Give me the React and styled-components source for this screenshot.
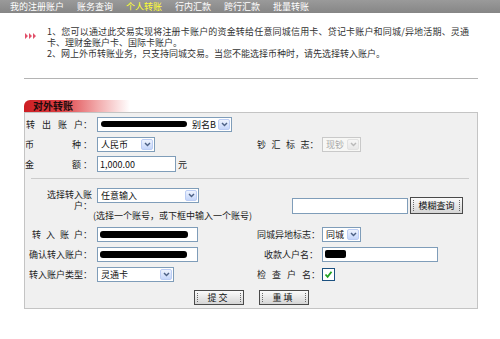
import React from 'react'
import styled, { createGlobalStyle } from 'styled-components'

const GlobalStyle = createGlobalStyle`
  body {
    margin: 0;
    background: #fff;
    font-family: "Noto Sans CJK SC", "Noto Sans", sans-serif;
    font-size: 9px;
    color: #222;
  }
`

const navItems = ['我的注册账户', '账务查询', '个人转账', '行内汇款', '跨行汇款', '批量转账']

function Chevron({ disabled }) {
    return (
        <svg width="7" height="5" viewBox="0 0 7 5">
            <path d="M1 1 L3.5 3.6 L6 1" fill="none" stroke={disabled ? '#b9b9b9' : '#4d6185'} strokeWidth="1.4" />
        </svg>
    )
}

function Select({ w, disabled, children }) {
    return (
        <SelectBox $w={w} $disabled={disabled}>
            <SelectText>{children}</SelectText>
            <ArrowBtn $disabled={disabled}>
                <Chevron disabled={disabled} />
            </ArrowBtn>
        </SelectBox>
    )
}

function Bullets() {
    return (
        <svg width="11" height="6" viewBox="0 0 11 6">
            <path d="M0 0 L3 3 L0 6 Z M4 0 L7 3 L4 6 Z M8 0 L11 3 L8 6 Z" fill="#e2506a" />
        </svg>
    )
}

function App() {
    return (
        <Page>
            <GlobalStyle />
            <NavBar>
                {navItems.map(item => (
                    <NavItem key={item} $active={item === '个人转账'}>{item}</NavItem>
                ))}
            </NavBar>

            <Notice>
                <BulletBox><Bullets /></BulletBox>
                <NoticeText>
                    <Line $justify>1、您可以通过此交易实现将注册卡账户的资金转给任意同城信用卡、贷记卡账户和同城/异地活期、灵通</Line>
                    <Line>卡、理财金账户卡、国际卡账户。</Line>
                    <Line>2、网上外币转账业务，只支持同城交易。当您不能选择币种时，请先选择转入账户。</Line>
                </NoticeText>
            </Notice>

            <Divider />

            <Section>
                <Tab>对外转账</Tab>
                <Panel>
                    <Row>
                        <Label $ws="5px">转 出 账 户：</Label>
                        <Cell>
                            <Select w={135}>
                                <Mask $w={86} />
                                <Alias>别名B</Alias>
                            </Select>
                        </Cell>
                    </Row>
                    <Row>
                        <SplitLabel><span>币</span><span>种 ：</span></SplitLabel>
                        <Cell><Select w={58}>人民币</Select></Cell>
                        <Label $pr="4px" $ws="3.5px">钞 汇 标 志：</Label>
                        <Cell><Select w={39} disabled>现钞</Select></Cell>
                    </Row>
                    <Row>
                        <SplitLabel><span>金</span><span>额 ：</span></SplitLabel>
                        <Cell>
                            <Field $w={79} $h={16}>1,000.00</Field>
                            <Unit>元</Unit>
                        </Cell>
                    </Row>

                    <Sep />

                    <PickRow>
                        <WrapLabel>选择转入账户：</WrapLabel>
                        <PickMid>
                            <Select w={102}>任意输入</Select>
                            <Hint>(选择一个账号，或下框中输入一个账号)</Hint>
                        </PickMid>
                        <PickRight>
                            <Field $w={116} $h={16} />
                            <SmallButton>模糊查询</SmallButton>
                        </PickRight>
                    </PickRow>

                    <Row>
                        <Label $ws="3px">转 入 账 户：</Label>
                        <Cell><Field $w={101} $h={15}><Mask $w={88} $h={7} /></Field></Cell>
                        <Label $pr="4px">同城异地标志：</Label>
                        <Cell><Select w={39}>同城</Select></Cell>
                    </Row>
                    <Row>
                        <Label>确认转入账户：</Label>
                        <Cell><Field $w={101} $h={15}><Mask $w={87} $h={7} /></Field></Cell>
                        <Label $pr="4px">收款人户名：</Label>
                        <Cell><Field $w={116} $h={15}><Mask $w={21} $h={8} $r="2px" /></Field></Cell>
                    </Row>
                    <Row>
                        <Label>转入账户类型：</Label>
                        <Cell><Select w={77}>灵通卡</Select></Cell>
                        <Label $pr="3px" $ws="4px">检 查 户 名：</Label>
                        <Cell>
                            <CheckBox>
                                <svg width="9" height="9" viewBox="0 0 9 9">
                                    <path d="M1.5 4.5 L3.6 6.8 L7.5 1.8" fill="none" stroke="#21a121" strokeWidth="1.8" />
                                </svg>
                            </CheckBox>
                        </Cell>
                    </Row>

                    <ButtonRow>
                        <Button>提交</Button>
                        <Button>重填</Button>
                    </ButtonRow>
                </Panel>
            </Section>
        </Page>
    )
}

export default App

const Page = styled.div`
    width: 500px;
    height: 339px;
    background: #fff;
`

const NavBar = styled.div`
    height: 13px;
    display: flex;
    align-items: center;
    gap: 13px;
    padding-left: 10px;
    background: linear-gradient(#9a9a9a, #868686);
`

const NavItem = styled.span`
    font-size: 9px;
    line-height: 13px;
    color: ${props => props.$active ? '#ffff33' : '#fff'};
    white-space: nowrap;
`

const Notice = styled.div`
    display: flex;
    padding: 13px 0 0 25px;
`

const BulletBox = styled.div`
    width: 22px;
    flex-shrink: 0;
    padding-top: 3px;
`

const NoticeText = styled.div`
    color: #333;
`

const Line = styled.div`
    height: 11px;
    line-height: 11px;
    white-space: nowrap;
    width: ${props => props.$justify ? '422px' : 'auto'};
    text-align: ${props => props.$justify ? 'justify' : 'left'};
    text-align-last: ${props => props.$justify ? 'justify' : 'auto'};
`

const Divider = styled.div`
    width: 454px;
    height: 1px;
    margin: 19px 0 0 24px;
    background: #b4b4b4;
`

const Section = styled.div`
    width: 454px;
    margin: 21px 0 0 24px;
`

const Tab = styled.div`
    width: 97px;
    height: 12px;
    padding-left: 9px;
    border-radius: 6px 0 0 0;
    background: linear-gradient(to right, #cc1d22 0%, #de4146 35%, #f2acad 70%, #fff 100%);
    font-size: 10px;
    font-weight: bold;
    line-height: 12px;
    color: #1c0b0b;
`

const Panel = styled.div`
    border: 1px solid #c4c4c4;
    background: #f0f0f0;
    padding: 1px 0 3px;
`

const Row = styled.div`
    display: grid;
    grid-template-columns: 72px 160px 65px 1fr;
    height: 20px;
    align-items: center;
`

const Label = styled.div`
    text-align: right;
    padding-right: ${props => props.$pr || '5px'};
    word-spacing: ${props => props.$ws || '0'};
    white-space: nowrap;
    color: #222;
`

const SplitLabel = styled.div`
    display: flex;
    justify-content: space-between;
    padding: 0 5px 0 0;
    white-space: nowrap;
`

const Cell = styled.div`
    display: flex;
    align-items: center;
`

const SelectBox = styled.div`
    box-sizing: border-box;
    width: ${props => props.$w}px;
    height: 15px;
    display: flex;
    align-items: center;
    padding-left: 3px;
    border: 1px solid ${props => props.$disabled ? '#c9c9c9' : '#7f9db9'};
    background: ${props => props.$disabled ? '#f7f7f5' : '#fff'};
    color: ${props => props.$disabled ? '#a8a8a8' : '#111'};
`

const SelectText = styled.div`
    flex: 1;
    display: flex;
    align-items: center;
    overflow: hidden;
    white-space: nowrap;
`

const ArrowBtn = styled.div`
    box-sizing: border-box;
    width: 12px;
    height: 11px;
    margin-right: 1px;
    display: flex;
    align-items: center;
    justify-content: center;
    border: 1px solid ${props => props.$disabled ? '#e2e2e2' : '#bccdf4'};
    border-radius: 2px;
    background: ${props => props.$disabled
        ? 'linear-gradient(#f6f6f6, #e8e8e8)'
        : 'linear-gradient(#eef3fe, #c5d6fa)'};
`

const Mask = styled.span`
    display: inline-block;
    width: ${props => props.$w}px;
    height: ${props => props.$h || 6}px;
    background: #000;
    border-radius: ${props => props.$r || '3px'};
`

const Alias = styled.span`
    margin-left: 5px;
`

const Field = styled.div`
    box-sizing: border-box;
    width: ${props => props.$w}px;
    height: ${props => props.$h}px;
    display: flex;
    align-items: center;
    padding-left: 2px;
    border: 1px solid #7f9db9;
    background: #fff;
    color: #111;
`

const Unit = styled.span`
    margin-left: 2px;
`

const Sep = styled.div`
    height: 1px;
    margin: 4px 8px 0 6px;
    background: #cbcbcb;
`

const PickRow = styled.div`
    display: grid;
    grid-template-columns: 72px 195px 1fr;
    align-items: start;
    padding: 9px 0 3px;
`

const WrapLabel = styled.div`
    width: 50px;
    margin: 2px 5px 0 auto;
    text-align: right;
    line-height: 10.5px;
`

const PickMid = styled.div`
    display: flex;
    flex-direction: column;
`

const Hint = styled.div`
    margin: 8px 0 0 -4px;
    line-height: 10px;
    white-space: nowrap;
`

const PickRight = styled.div`
    display: flex;
    align-items: center;
    padding-top: 9px;
`

const Button = styled.div`
    position: relative;
    box-sizing: border-box;
    width: 50px;
    height: 15px;
    display: flex;
    align-items: center;
    justify-content: center;
    letter-spacing: 2px;
    border: 1px solid #4a4a4a;
    background: linear-gradient(#fbfbfb, #d5d5d5);
    color: #111;

    &::before,
    &::after {
        content: '';
        position: absolute;
        top: 2px;
        bottom: 2px;
        border-left: 1px dotted #6a6a6a;
    }
    &::before { left: 2px; }
    &::after { right: 2px; }
`

const SmallButton = styled(Button)`
    width: 53px;
    height: 17px;
    margin-left: 2px;
    letter-spacing: 0;
`

const CheckBox = styled.div`
    box-sizing: border-box;
    width: 13px;
    height: 13px;
    display: flex;
    align-items: center;
    justify-content: center;
    border: 1px solid #1c5180;
    background: #fff;
`

const ButtonRow = styled.div`
    display: flex;
    justify-content: center;
    gap: 15px;
    margin-top: 6px;
`
